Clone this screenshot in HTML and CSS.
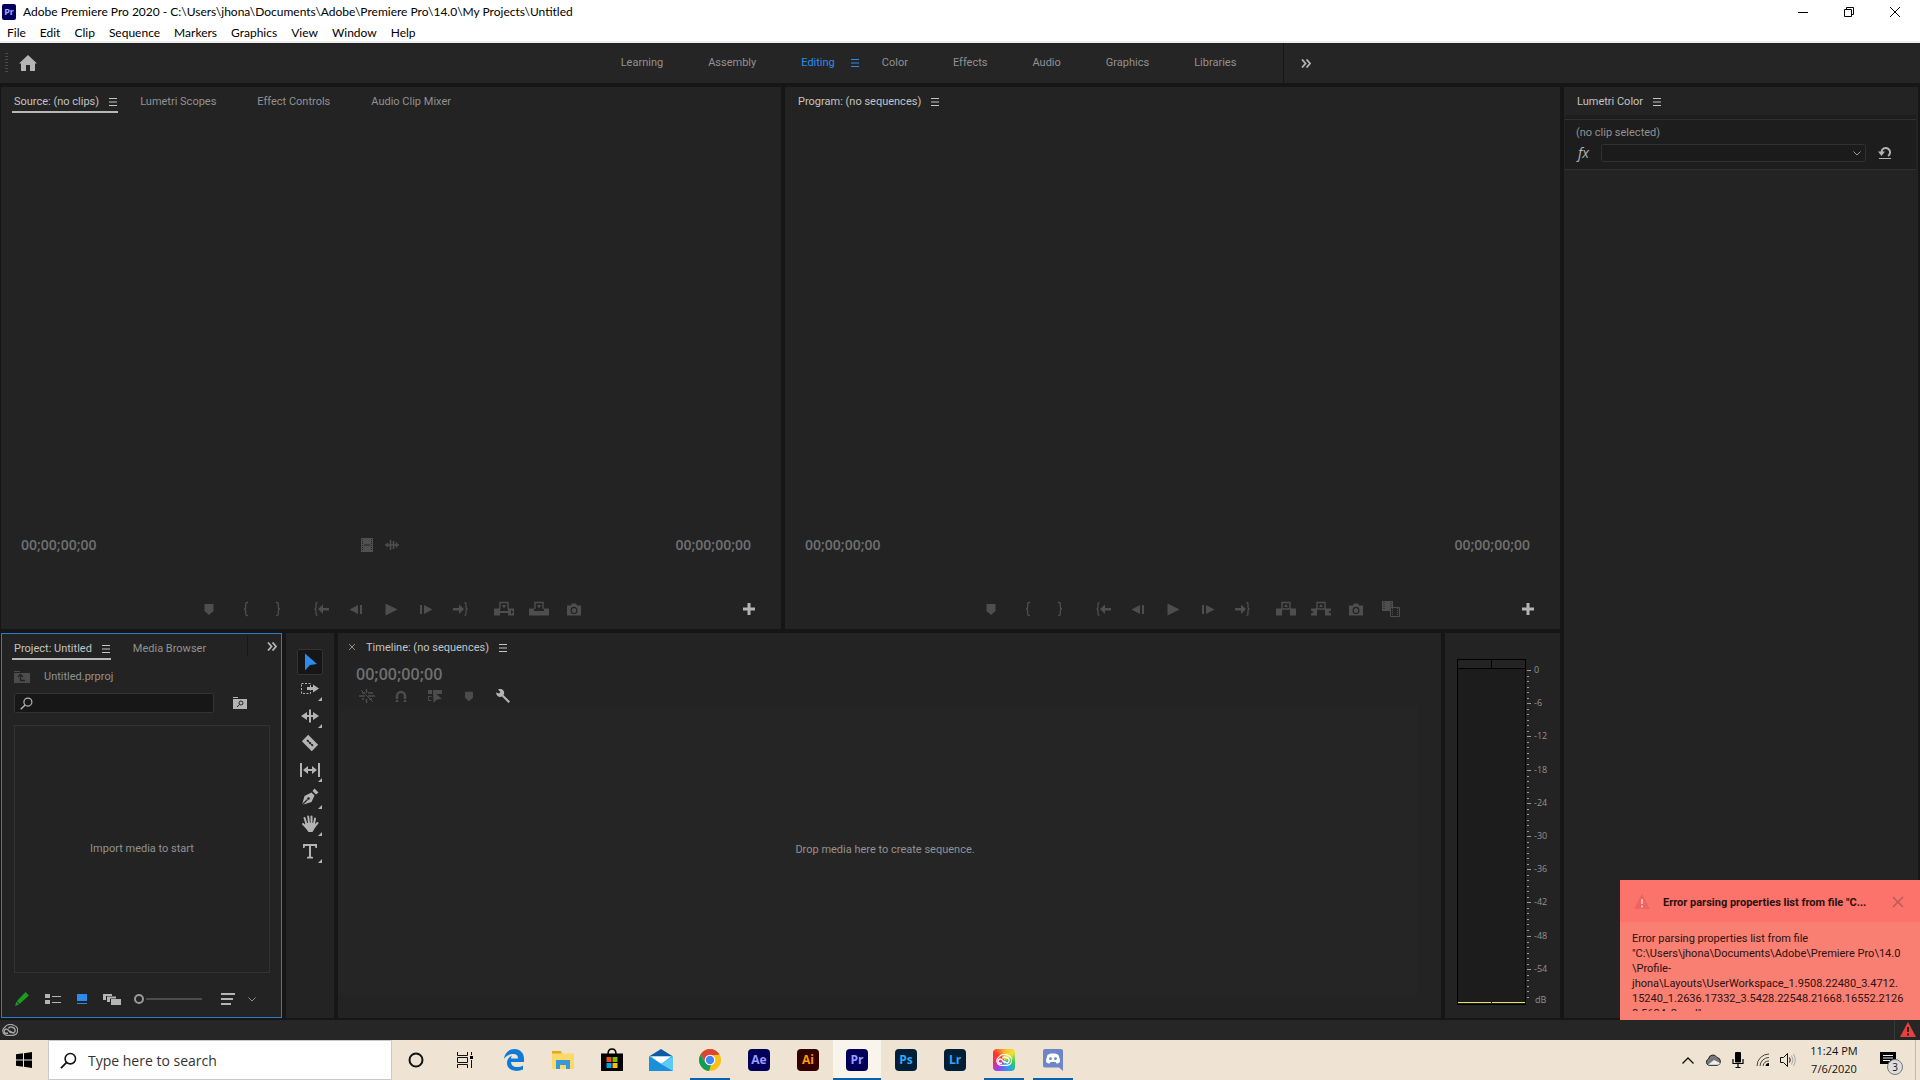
FILE: index.html
```html
<!DOCTYPE html>
<html lang="en">
<head>
<meta charset="utf-8">
<title>Adobe Premiere Pro 2020</title>
<link rel="stylesheet" href="styles.css">
</head>
<body>
<svg class="sprite" aria-hidden="true">
  <symbol id="menu" viewBox="0 0 8 8"><path d="M0 .5h8M0 4h8M0 7.5h8" stroke="currentColor"/></symbol>
  <symbol id="more" viewBox="0 0 10 9"><path d="M1 .5l3.5 4L1 8.500M5.500.5l3.500 4-3.500 4" fill="none" stroke="currentColor" stroke-width="1.800"/></symbol>
  <symbol id="chev" viewBox="0 0 8 5"><path d="M.5.5L4 4 7.500.5" fill="none" stroke="currentColor"/></symbol>
  <symbol id="marker" viewBox="0 0 16 16"><path d="M3.500 3h9v7L8 14l-4.500-4z" fill="currentColor"/></symbol>
  <symbol id="brl" viewBox="0 0 16 16"><path d="M10 1.500H9Q7.700 1.500 7.700 3v3Q7.700 8 6 8q1.700 0 1.700 2v3q0 1.500 1.300 1.500h1" fill="none" stroke="currentColor" stroke-width="1.300"/></symbol>
  <symbol id="brr" viewBox="0 0 16 16"><path d="M6 1.500h1q1.300 0 1.300 1.500v3q0 2 1.700 2-1.700 0-1.700 2v3q0 1.500-1.300 1.500H6" fill="none" stroke="currentColor" stroke-width="1.300"/></symbol>
  <symbol id="goin" viewBox="0 0 16 16"><path d="M4.500 1.500Q3 1.500 3 3v3q0 2-1.500 2Q3 8 3 10v3q0 1.500 1.500 1.500" fill="none" stroke="currentColor" stroke-width="1.300"/><path d="M5 8l5-4.500V7h6v2.500h-6V13z" fill="currentColor"/></symbol>
  <symbol id="goout" viewBox="0 0 16 16"><path d="M11.500 1.500Q13 1.500 13 3v3q0 2 1.500 2Q13 8 13 10v3q0 1.500-1.500 1.500" fill="none" stroke="currentColor" stroke-width="1.300"/><path d="M11 8L6 3.500V7H0v2.500h6V13z" fill="currentColor"/></symbol>
  <symbol id="prev" viewBox="0 0 16 16"><path d="M1.500 8.500L10 4v9zM12 4h2v9h-2z" fill="currentColor"/></symbol>
  <symbol id="next" viewBox="0 0 16 16"><path d="M14.500 8.500L6 4v9zM2 4h2v9H2z" fill="currentColor"/></symbol>
  <symbol id="play" viewBox="0 0 16 16"><path d="M2.500 2.500l12 6-12 6z" fill="currentColor"/></symbol>
  <symbol id="insert" viewBox="0 0 20 16"><path d="M6 8V1.500h8V8" fill="none" stroke="currentColor" stroke-width="1.400"/><path d="M8 4h4l-2 3.500zM0 7.500h6V10h8V7.500h6v7h-6V12H6v2.500H0z" fill="currentColor"/><path d="M17 9l2.500 2L17 13z" fill="#232323"/></symbol>
  <symbol id="overwrite" viewBox="0 0 20 16"><path d="M6 8V1.500h8V8" fill="none" stroke="currentColor" stroke-width="1.400"/><path d="M8 4h4l-2 3.500zM0 7.500h5V10h10V7.500h5v7H0z" fill="currentColor"/></symbol>
  <symbol id="lift" viewBox="0 0 20 16"><path d="M6 8V1.500h8V8z" fill="none" stroke="currentColor" stroke-width="1.400"/><path d="M8 6h4l-2-3zM0 7.500h6v7H0zM14 7.500h6v7h-6z" fill="currentColor"/></symbol>
  <symbol id="extract" viewBox="0 0 20 16"><path d="M6 8V1.500h8V8z" fill="none" stroke="currentColor" stroke-width="1.400"/><path d="M8 6h4l-2-3zM0 7.500h6v7H0v-2l3-1.500-3-1.500zM20 7.500h-6v7h6v-2L17 11l3-1.500z" fill="currentColor"/></symbol>
  <symbol id="camera" viewBox="0 0 16 16"><path fill-rule="evenodd" d="M1 4.500h4L6 2.500h4l1 2h4v10H1zM8 5.700a3.500 3.700 0 100 7.400 3.500 3.700 0 000-7.400zM8 7a2.300 2.500 0 110 5 2.300 2.500 0 010-5z" fill="currentColor"/></symbol>
  <symbol id="compare" viewBox="0 0 20 16"><path d="M1 0h11v10H1z" fill="currentColor"/><path d="M3 1v8M10 1v8" stroke="#232323" stroke-dasharray="1 1"/><path d="M9.500 6.500h9v9h-9z" fill="#232323" stroke="currentColor"/><path d="M11.500 7v8M16.500 7v8" stroke="currentColor" stroke-dasharray="1 1"/></symbol>
  <symbol id="plus" viewBox="0 0 12 12"><path d="M4.500 0h3v4.500H12v3H7.500V12h-3V7.500H0v-3h4.500z" fill="currentColor"/></symbol>
  <symbol id="film" viewBox="0 0 14 14"><path d="M1 0h12v14H1z" fill="currentColor"/><path d="M2.500 1v12M11.500 1v12" stroke="#232323" stroke-dasharray="1 1"/><path d="M4 7h6" stroke="#232323"/></symbol>
  <symbol id="wave" viewBox="0 0 14 14"><path d="M0 7h14M2.500 5v4M5.500 2v10M8.500 3v8M11.500 4.500v5" stroke="currentColor" stroke-width="1.500"/></symbol>
  <symbol id="glass" viewBox="0 0 14 14"><circle cx="8.500" cy="5.500" r="4.300" fill="none" stroke="currentColor" stroke-width="1.300"/><path d="M5.500 8.500L.8 13.200" stroke="currentColor" stroke-width="1.500"/></symbol>
  <symbol id="warn" viewBox="0 0 16 16"><path d="M8 0l8 15H0z" fill="currentColor"/></symbol>
  <symbol id="ticks" viewBox="0 0 4 66" preserveAspectRatio="none"><path d="M0 1h4M0 12h2M0 23h2M0 34h2M0 45h2M0 56h2" stroke="#9a9a9a" stroke-width="2" shape-rendering="crispEdges"/></symbol>
  <symbol id="cloud" viewBox="0 0 16 12"><path d="M5 11.300A4.500 4.500 0 013 3 6 5 0 0112 1.500a5 5 0 01-1 9.800z" fill="none" stroke="currentColor" stroke-width="1.200"/><path d="M9 9L6.300 6.300A2.200 2.200 0 103.500 9.300H6M6.500 4.500A2.500 2.500 0 0110.500 3.500a2.900 2.900 0 011 5.500Q10 9 8 7" fill="none" stroke="currentColor" stroke-width="1.400"/></symbol>
</svg>

<header class="titlebar">
  <div class="title-row">
    <span class="app-logo">Pr</span>
    <span class="title">Adobe Premiere Pro 2020 - C:\Users\jhona\Documents\Adobe\Premiere Pro\14.0\My Projects\Untitled</span>
    <button class="win" aria-label="Minimize"><svg width="10" height="10"><path d="M0 5.500h10" stroke="#000"/></svg></button>
    <button class="win" aria-label="Restore"><svg width="10" height="10" fill="none" stroke="#000"><path d="M.5 2.500h7v7h-7zM2.500 2.500v-2h7v7h-2"/></svg></button>
    <button class="win" aria-label="Close"><svg width="10" height="10"><path d="M0 0l10 10M10 0L0 10" stroke="#000"/></svg></button>
  </div>
  <nav class="menubar"><button>File</button><button>Edit</button><button>Clip</button><button>Sequence</button><button>Markers</button><button>Graphics</button><button>View</button><button>Window</button><button>Help</button></nav>
</header>

<div class="workbar">
  <div class="workbar-side"><span class="grip"></span><button aria-label="Home"><svg width="18" height="16" viewBox="0 0 18 16"><path d="M9 0l9 8.500h-2V16h-5v-6H7v6H2V8.500H0z" fill="#b4b4b4"/></svg></button></div>
  <nav class="workspaces">
    <button>Learning</button><button>Assembly</button><button class="current">Editing<svg width="8" height="8"><use href="#menu"/></svg></button><button>Color</button><button>Effects</button><button>Audio</button><button>Graphics</button><button>Libraries</button>
  </nav>
  <button class="overflow" aria-label="More workspaces"><svg width="10" height="9"><use href="#more"/></svg></button>
  <div class="workbar-side"></div>
</div>

<main class="workspace">
  <div class="monitors">
    <section class="panel monitor">
      <div class="tabs">
        <button class="tab active">Source: (no clips)<svg width="8" height="8"><use href="#menu"/></svg></button>
        <button class="tab">Lumetri Scopes</button><button class="tab">Effect Controls</button><button class="tab">Audio Clip Mixer</button>
      </div>
      <div class="view"></div>
      <div class="times">
        <span>00;00;00;00</span>
        <span class="drag"><svg width="14" height="14"><use href="#film"/></svg><svg width="14" height="14"><use href="#wave"/></svg></span>
        <span>00;00;00;00</span>
      </div>
      <div class="transport">
        <span class="side"></span>
        <div class="grp"><button aria-label="Add marker"><svg width="16" height="16"><use href="#marker"/></svg></button></div>
        <div class="grp tight"><button aria-label="Mark in"><svg width="16" height="16"><use href="#brl"/></svg></button><button aria-label="Mark out"><svg width="16" height="16"><use href="#brr"/></svg></button></div>
        <div class="grp"><button aria-label="Go to in"><svg width="16" height="16"><use href="#goin"/></svg></button><button aria-label="Step back"><svg width="16" height="16"><use href="#prev"/></svg></button><button aria-label="Play"><svg width="16" height="16"><use href="#play"/></svg></button><button aria-label="Step forward"><svg width="16" height="16"><use href="#next"/></svg></button><button aria-label="Go to out"><svg width="16" height="16"><use href="#goout"/></svg></button></div>
        <div class="grp"><button aria-label="Insert"><svg width="20" height="16"><use href="#insert"/></svg></button><button aria-label="Overwrite"><svg width="20" height="16"><use href="#overwrite"/></svg></button><button aria-label="Export frame"><svg width="16" height="16"><use href="#camera"/></svg></button></div>
        <span class="side"><button class="add" aria-label="Button editor"><svg width="12" height="12"><use href="#plus"/></svg></button></span>
      </div>
    </section>
    <section class="panel monitor program">
      <div class="tabs"><button class="tab active plain">Program: (no sequences)<svg width="8" height="8"><use href="#menu"/></svg></button></div>
      <div class="view"></div>
      <div class="times"><span>00;00;00;00</span><span>00;00;00;00</span></div>
      <div class="transport">
        <span class="side"></span>
        <div class="grp"><button aria-label="Add marker"><svg width="16" height="16"><use href="#marker"/></svg></button></div>
        <div class="grp tight"><button aria-label="Mark in"><svg width="16" height="16"><use href="#brl"/></svg></button><button aria-label="Mark out"><svg width="16" height="16"><use href="#brr"/></svg></button></div>
        <div class="grp"><button aria-label="Go to in"><svg width="16" height="16"><use href="#goin"/></svg></button><button aria-label="Step back"><svg width="16" height="16"><use href="#prev"/></svg></button><button aria-label="Play"><svg width="16" height="16"><use href="#play"/></svg></button><button aria-label="Step forward"><svg width="16" height="16"><use href="#next"/></svg></button><button aria-label="Go to out"><svg width="16" height="16"><use href="#goout"/></svg></button></div>
        <div class="grp"><button aria-label="Lift"><svg width="20" height="16"><use href="#lift"/></svg></button><button aria-label="Extract"><svg width="20" height="16"><use href="#extract"/></svg></button><button aria-label="Export frame"><svg width="16" height="16"><use href="#camera"/></svg></button><button aria-label="Comparison view"><svg width="20" height="16"><use href="#compare"/></svg></button></div>
        <span class="side"><button class="add" aria-label="Button editor"><svg width="12" height="12"><use href="#plus"/></svg></button></span>
      </div>
    </section>
  </div>

  <div class="lower">
    <section class="panel project">
      <div class="tabs">
        <button class="tab active">Project: Untitled<svg width="8" height="8"><use href="#menu"/></svg></button>
        <button class="tab">Media Browser</button>
        <button class="overflow" aria-label="More panels"><svg width="10" height="9"><use href="#more"/></svg></button>
      </div>
      <div class="crumb"><svg width="16" height="12" viewBox="0 0 16 12"><path d="M0 0h6v1H0zM0 2h16v10H0z" fill="#4c4c4c"/><path d="M4 6l2.500-2.500L9 6M6.500 4v5.500H11" fill="none" stroke="#232323" stroke-width="1.300"/></svg><span>Untitled.prproj</span></div>
      <div class="find">
        <label class="find-box"><svg width="13" height="13"><use href="#glass"/></svg><input type="text" aria-label="Search project"></label>
        <button aria-label="New search bin"><svg width="14" height="12" viewBox="0 0 14 12"><path d="M0 0h5v1H0zM0 2h14v10H0z" fill="#b4b4b4"/><circle cx="8" cy="6" r="2" fill="none" stroke="#232323"/><path d="M6.500 7.500L4 10" stroke="#232323"/></svg></button>
      </div>
      <div class="bin">Import media to start</div>
      <div class="bin-tools">
        <button aria-label="Read/write"><svg width="14" height="14" viewBox="0 0 14 14"><path d="M10.500 0L14 3.500 4.500 12 2 9z" fill="#1d9a20"/><path d="M1.500 9.500L4 12.500 0 14z" fill="#1d9a20"/></svg></button>
        <button aria-label="List view"><svg width="16" height="11" viewBox="0 0 16 11"><path d="M0 0h5v4H0zM0 6h5v4H0z" fill="#b4b4b4"/><path d="M7 2.500h9M7 8.500h9" stroke="#b4b4b4"/></svg></button>
        <button aria-label="Icon view"><svg width="10" height="10" viewBox="0 0 10 10"><path d="M0 0h10v7H0zM0 9h10v1H0z" fill="#2d8ceb"/></svg></button>
        <button aria-label="Freeform view"><svg width="18" height="11" viewBox="0 0 18 11"><path d="M0 0h9v2H3v4H0z" fill="#b4b4b4"/><path d="M4 2.500h9v2H7V8H4z" fill="#b4b4b4"/><path d="M8 5h10v6H8z" fill="#b4b4b4"/></svg></button>
        <input class="zoom" type="range" min="0" max="100" value="0" aria-label="Icon size">
        <button class="sort" aria-label="Sort"><svg width="14" height="12" viewBox="0 0 14 12"><path d="M0 1h14M0 6h12M0 11h10" stroke="#b4b4b4" stroke-width="2"/></svg></button>
        <button aria-label="Sort options"><svg width="8" height="5"><use href="#chev"/></svg></button>
      </div>
    </section>

    <section class="panel tools">
      <button class="selected" aria-label="Selection"><svg width="20" height="20" viewBox="0 0 20 20"><path d="M5 1.500L17 12l-7 1-5 5.500z" fill="#2d8ceb"/></svg></button>
      <button class="more" aria-label="Track select"><svg width="20" height="20" viewBox="0 0 20 20"><path d="M1.500 4.500h9v10h-9z" fill="none" stroke="#b4b4b4" stroke-dasharray="2 1.500"/><path d="M7 8h6V5.500l6 4-6 4V11H7z" fill="#b4b4b4"/></svg></button>
      <button class="more" aria-label="Ripple edit"><svg width="20" height="20" viewBox="0 0 20 20"><path d="M9 3.500h2v13H9zM1 10l6-4v3h6V6l6 4-6 4v-3H7v3z" fill="#b4b4b4"/></svg></button>
      <button aria-label="Razor"><svg width="20" height="20" viewBox="0 0 20 20"><g transform="rotate(45 10 10)"><path d="M3 5.500h14v9H3z" fill="#b4b4b4"/><path d="M5.500 10h9M7 9v2M10 9v2M13 9v2" stroke="#232323" stroke-width="1.200"/></g></svg></button>
      <button class="more" aria-label="Slip"><svg width="22" height="20" viewBox="0 0 22 20"><path d="M1 3h2v14H1zM19 3h2v14h-2zM4 10l5-4v3h4V6l5 4-5 4v-3H9v3z" fill="#b4b4b4"/></svg></button>
      <button class="more" aria-label="Pen"><svg width="20" height="20" viewBox="0 0 20 20"><path d="M12.500 4l2-2.500 4 4L16 7.500z" fill="#b4b4b4"/><path d="M2 18L4.500 9 11.500 5.500 14.500 8.500 11.500 15z" fill="#b4b4b4"/><path d="M2 18l5.500-5.500" stroke="#232323" stroke-width="1.200"/><circle cx="8.500" cy="11.500" r="1.300" fill="#232323"/></svg></button>
      <button class="more" aria-label="Hand"><svg width="20" height="20" viewBox="0 0 20 20"><path d="M6.500 10L4.500 4M9 9L8.200 2.500M11.500 9V2.500M14 10l1-5.500M6.500 13.500L3 10M14.500 12.500L17.500 9" stroke="#b4b4b4" stroke-width="2" stroke-linecap="round"/><path d="M5.500 9h9.500l.5 4-3 5H8.500l-4-5.500z" fill="#b4b4b4"/></svg></button>
      <button class="more" aria-label="Type"><svg width="20" height="20" viewBox="0 0 20 20"><path d="M3 3h14v4h-1.500L15 5h-4v10.500l2 .5v1.500H7V16l2-.5V5H5l-.5 2H3z" fill="#b4b4b4"/></svg></button>
    </section>

    <section class="panel timeline">
      <div class="tabs"><button class="close" aria-label="Close tab"><svg width="6" height="6"><path d="M0 0l6 6M6 0L0 6" stroke="#8c8c8c"/></svg></button><button class="tab active plain">Timeline: (no sequences)<svg width="8" height="8"><use href="#menu"/></svg></button></div>
      <div class="seq-time">00;00;00;00</div>
      <div class="seq-tools">
        <button aria-label="Nest"><svg width="16" height="14" viewBox="0 0 16 14"><path d="M0 7h6M9 7h7M3 4h3M9 4h5M3 10h2M10 10h3M7.500 0v4M7.500 10v4" stroke="currentColor" stroke-width="1.500"/><path d="M2 1l12 12" stroke="currentColor"/></svg></button>
        <button aria-label="Snap"><svg width="12" height="12" viewBox="0 0 12 12"><path d="M2 12V6a4 4 0 018 0v6" fill="none" stroke="currentColor" stroke-width="2.500"/><path d="M0 9.500h12" stroke="#232323"/></svg></button>
        <button aria-label="Linked selection"><svg width="14" height="14" viewBox="0 0 14 14"><path d="M0 1h4v4H0zM5 1h9v4H5z" fill="currentColor"/><path d="M3.500 7.500h-3v4h3" fill="none" stroke="currentColor"/><path d="M5 2l9 8-5 .5L5.500 14z" fill="currentColor"/></svg></button>
        <button aria-label="Add marker"><svg width="14" height="14" viewBox="0 0 16 16"><use href="#marker"/></svg></button>
        <button class="lit" aria-label="Timeline settings"><svg width="14" height="14" viewBox="0 0 14 14"><path d="M2 .5A4 4 0 017.500 6L14 12.500 12.500 14 6 7.500A4 4 0 01.2 3.500L3 4.500 4.500 3z" fill="currentColor"/></svg></button>
      </div>
      <div class="drop">Drop media here to create sequence.</div>
    </section>

    <section class="panel audio">
      <div class="meter"><div class="peaks"><i></i><i></i></div><div class="floor"><i></i><i></i></div></div>
      <div class="scale">
        <ol>
          <li><svg width="4" height="33"><use href="#ticks"/></svg><span>0</span></li>
          <li><svg width="4" height="33"><use href="#ticks"/></svg><span>-6</span></li>
          <li><svg width="4" height="33"><use href="#ticks"/></svg><span>-12</span></li>
          <li><svg width="4" height="33"><use href="#ticks"/></svg><span>-18</span></li>
          <li><svg width="4" height="33"><use href="#ticks"/></svg><span>-24</span></li>
          <li><svg width="4" height="33"><use href="#ticks"/></svg><span>-30</span></li>
          <li><svg width="4" height="33"><use href="#ticks"/></svg><span>-36</span></li>
          <li><svg width="4" height="33"><use href="#ticks"/></svg><span>-42</span></li>
          <li><svg width="4" height="33"><use href="#ticks"/></svg><span>-48</span></li>
          <li><svg width="4" height="33"><use href="#ticks"/></svg><span>-54</span></li>
        </ol>
        <span class="db">dB</span>
      </div>
    </section>
  </div>

  <section class="panel lumetri">
    <div class="tabs"><button class="tab active plain">Lumetri Color<svg width="8" height="8"><use href="#menu"/></svg></button></div>
    <div class="clip">
      <span>(no clip selected)</span>
      <div class="fx-row">
        <label for="fx">fx</label>
        <div class="select"><select id="fx"><option></option></select><svg width="8" height="5"><use href="#chev"/></svg></div>
        <button aria-label="Reset"><svg width="14" height="14" viewBox="0 0 14 14"><path d="M3.500 6a4.300 4.300 0 116.500 4" fill="none" stroke="#b4b4b4" stroke-width="2"/><path d="M0 5.500h7L3.500 10z" fill="#b4b4b4"/><path d="M1 12.500h12" stroke="#b4b4b4"/></svg></button>
      </div>
    </div>
  </section>

  <aside class="toast" role="alert">
    <header><svg width="16" height="16"><use href="#warn"/><path d="M8 5v5M8 11.500v2" stroke="#ffb5a8" stroke-width="2"/></svg><strong>Error parsing properties list from file "C...</strong><button aria-label="Dismiss"><svg width="12" height="12"><path d="M1 1l10 10M11 1L1 11" stroke="#b85c55" stroke-width="1.500"/></svg></button></header>
    <p>Error parsing properties list from file<br>"C:\Users\jhona\Documents\Adobe\Premiere Pro\14.0<br>\Profile-<br>jhona\Layouts\UserWorkspace_1.9508.22480_3.4712.<br>15240_1.2636.17332_3.5428.22548.21668.16552.2126<br>8.5624_2.xml"</p>
  </aside>
</main>

<footer class="status">
  <svg class="cc-mark" width="16" height="12"><use href="#cloud"/></svg>
  <span class="alert"><svg width="16" height="16"><use href="#warn"/><path d="M8 5v5M8 11.500v2" stroke="#222" stroke-width="2"/></svg></span>
</footer>

<footer class="taskbar">
  <button class="start" aria-label="Start"><svg width="16" height="16" viewBox="0 0 16 16"><path d="M0 2.300L7 1.300v6.200H0zM8 1.200L16 0v7.500H8zM0 8.500h7v6.200l-7-1zM8 8.500h8V16l-8-1.200z"/></svg></button>
  <label class="search"><svg width="17" height="17" viewBox="0 0 14 14"><use href="#glass"/></svg><input type="text" placeholder="Type here to search" aria-label="Search Windows"></label>
  <nav class="apps">
    <button aria-label="Cortana"><svg width="16" height="16"><circle cx="8" cy="8" r="6.500" fill="none" stroke="#111" stroke-width="2"/></svg></button>
    <button aria-label="Task view"><svg width="16" height="16" viewBox="0 0 16 16"><path d="M.5 0v3.500h10V0M.5 16v-3.500h10V16M.5 5.500h10v5H.5zM14.500 0v3M14.500 8v8" fill="none" stroke="#111"/><path d="M13 4h3v3h-3z"/></svg></button>
    <button aria-label="Edge"><svg width="20" height="22" viewBox="0 0 20 22"><path fill="#0f7bd8" d="M0 10C.5 4 5 0 10.500 0 16.500 0 20 4.500 20 9.500V13H7c0 3 2.500 5 6 5 2.300 0 4.200-.6 6-1.600v4.200C17 21.500 15 22 12.500 22 6.500 22 3 18.500 3 14c0-3.500 2-6 5-7.500C7.300 7.500 7 8.500 7 9.500h7c0-3-1.500-4.500-4.500-4.500C5.500 5 2 7 0 10z"/></svg></button>
    <button aria-label="File Explorer"><svg width="22" height="18" viewBox="0 0 22 18"><path fill="#e0a91b" d="M0 0h9l1 3H0z"/><path fill="#ffd968" d="M0 2.500h22V18H0z"/><path fill="#3a98d8" d="M4 9h14v9h-4v-4H8v4H4z"/></svg></button>
    <button aria-label="Store"><svg width="24" height="24" viewBox="0 0 24 24"><path d="M8 6q0-5 4-5t4 5" fill="none" stroke="#000" stroke-width="1.500"/><path d="M1 5.500h22V23H1z"/><path fill="#f25022" d="M6.500 9h5v5h-5z"/><path fill="#7fba00" d="M12.500 9h5v5h-5z"/><path fill="#00a4ef" d="M6.500 15h5v5h-5z"/><path fill="#ffb900" d="M12.500 15h5v5h-5z"/></svg></button>
    <button aria-label="Mail"><svg width="24" height="22" viewBox="0 0 24 22"><path fill="#0c59a4" d="M0 7.500L12 0l12 7.500z"/><path fill="#2cb6f0" d="M0 7.500h24V22H0z"/><path fill="#fff" d="M2 7.500h20L12 15z"/><path fill="#1a90dc" d="M0 7.500L24 22H0z"/><path fill="#5cc9f7" d="M24 7.500L12 15l12 7z"/></svg></button>
    <button class="open" aria-label="Chrome"><svg width="22" height="22" viewBox="0 0 22 22"><circle cx="11" cy="11" r="11" fill="#fbc116"/><path fill="#db4437" d="M1.500 5.500A11 11 0 0120.500 5.500L11 6.500 6.500 13z"/><path fill="#0f9d58" d="M1.500 5.500L6.500 13.500 12 16l-2 6A11 11 0 011.500 5.500z"/><circle cx="11" cy="11" r="5.300" fill="#fff"/><circle cx="11" cy="11" r="4.200" fill="#4285f4"/></svg></button>
    <button><span class="tile ae">Ae</span></button>
    <button><span class="tile ai">Ai</span></button>
    <button class="open active"><span class="tile pr">Pr</span></button>
    <button><span class="tile ps">Ps</span></button>
    <button><span class="tile lr">Lr</span></button>
    <button class="open" aria-label="Creative Cloud"><span class="tile cc"><svg width="16" height="12"><use href="#cloud"/></svg></span></button>
    <button class="open" aria-label="Discord"><svg width="20" height="22" viewBox="0 0 20 22"><path fill="#6f85c9" d="M2 0h16q2 0 2 2v20l-4-3.500H2q-2 0-2-2V2Q0 0 2 0z"/><path fill="#fff" d="M4.500 6q2.500-2 4-1.500h3q1.500-.5 4 1.500 1.500 3.500 1.500 7-1.500 1.500-3.500 1.500l-1-1.500h-5l-1 1.500Q4.500 14.500 3 13q0-3.500 1.500-7z"/><circle cx="7.500" cy="9.700" r="1.400" fill="#6f85c9"/><circle cx="12.500" cy="9.700" r="1.400" fill="#6f85c9"/></svg></button>
  </nav>
  <div class="tray">
    <button aria-label="Hidden icons"><svg width="12" height="7" viewBox="0 0 12 7"><path d="M.5 6.500L6 1l5.500 5.500" fill="none" stroke="#111" stroke-width="1.300"/></svg></button>
    <button aria-label="OneDrive"><svg width="16" height="12" viewBox="0 0 16 12"><path d="M4 11.300A3.300 3.300 0 013.500 5a4.500 4.500 0 018.500-1.500 4 4 0 01.5 7.800z" fill="#777" stroke="#222"/><path d="M3 10.800L9 6l6 3q-.5 1.800-2.500 1.800z" fill="#eee"/></svg></button>
    <button aria-label="Microphone"><svg width="12" height="16" viewBox="0 0 12 16"><rect x="3" width="6" height="10.500" rx="1"/><path d="M1 7v4.500h10V7M6 12v3M3.500 15.500h5" fill="none" stroke="#000" stroke-width="1.200"/></svg></button>
    <button aria-label="Network"><svg width="14" height="14" viewBox="0 0 14 14"><path d="M1 13A12 12 0 0113 1M4 13A9 9 0 0113 4.500M7 13a6 6 0 016-5" fill="none" stroke="#444"/><path d="M9.500 13a3.500 3.500 0 013.500-3v3z"/></svg></button>
    <button aria-label="Volume"><svg width="16" height="14" viewBox="0 0 16 14"><path d="M.5 4.500h3l4-4v13l-4-4h-3zM9.500 4.500q1.500 2.500 0 5" fill="none" stroke="#111"/><path d="M11.500 2.500q3 4.500 0 9M13.500 1q3.500 6 0 12" fill="none" stroke="#aaa"/></svg></button>
    <time>11:24 PM<br>7/6/2020</time>
    <button class="notif" aria-label="Notifications"><svg width="16" height="16" viewBox="0 0 16 16"><path d="M0 0h16v12h-3v3l-3-3H0z"/><path d="M3 3.500h10M3 6h10M3 8.500h7" stroke="#eee"/></svg><span class="badge">3</span></button>
  </div>
</footer>
</body>
</html>
```
FILE: styles.css
```css
* { box-sizing: border-box; }
body {
  margin: 0;
  min-height: 100vh;
  display: flex;
  flex-direction: column;
  background: #161616;
  color: #929292;
  font: 11px/16px Roboto, "Open Sans", sans-serif;
}
button {
  display: flex;
  align-items: center;
  justify-content: center;
  margin: 0;
  padding: 0;
  border: 0;
  background: none;
  color: inherit;
  font: inherit;
  white-space: nowrap;
}
svg { display: block; flex: none; }
.sprite { position: absolute; width: 0; height: 0; }

/* Title and menu */
.titlebar { background: #fff; color: #000; font: 12px/16px Lato, sans-serif; border-bottom: 2px solid #eef0ee; }
.title-row { display: flex; align-items: center; height: 23px; padding: 0 2px; }
.title { flex: 1; padding-left: 7px; }
.app-logo { width: 14px; height: 16px; border-radius: 2px; background: #00005b; color: #b0a8ff; font: bold 9px/15px "Open Sans", sans-serif; text-align: center; }
.win { width: 46px; height: 20px; }
.menubar { display: flex; gap: 14px; height: 18px; padding: 2px 0 0 7px; }

/* Workspace bar */
.workbar { display: flex; height: 40px; background: #252525; }
.workbar-side { flex: 1; display: flex; align-items: center; gap: 11px; padding-left: 5px; }
.workbar-side:last-child { padding: 0; }
.grip { width: 3px; height: 20px; background: repeating-linear-gradient(#4a4a4a 0 1px, #252525 1px 3px); }
.workspaces { display: flex; align-items: center; gap: 45px; padding: 0 47px 0 23px; border-right: 1px solid #161616; }
.workspaces button { gap: 16px; }
.workspaces .current { color: #2d8ceb; margin-right: -22px; }
.overflow { color: #b4b4b4; }
.workbar .overflow { width: 43px; }

/* Panel layout */
.workspace {
  position: relative;
  flex: 1;
  display: grid;
  grid-template-columns: 1559fr 354fr;
  grid-template-rows: 542fr 385fr;
  gap: 4px;
  padding: 4px 2px 2px 1px;
}
.monitors { display: grid; grid-template-columns: 780fr 775fr; gap: 4px; }
.lower { display: grid; grid-template-columns: 281px 48px 1fr 115px; gap: 4px; }
.lumetri { grid-column: 2; grid-row: 1 / 3; }
.panel { display: flex; flex-direction: column; background: #232323; min-width: 0; }
.tabs { display: flex; gap: 41px; height: 28px; padding-left: 11px; }
.tab { height: 26px; border-bottom: 2px solid transparent; padding-top: 5px; }
.tab.active { gap: 10px; color: #c4c4c4; border-bottom-color: #b8b8b8; margin-right: -19px; padding-left: 2px; padding-right: 1px; }
.tab.plain { border-bottom-color: transparent; }

/* Monitors */
.view { flex: 1; }
.times { display: flex; justify-content: space-between; align-items: center; height: 24px; margin-bottom: 40px; padding: 0 30px 0 20px; color: #707070; font: 600 14px/16px "Open Sans", sans-serif; }
.drag { display: flex; gap: 11px; margin-right: 14px; color: #505050; }
.transport { display: flex; align-items: center; height: 24px; margin-bottom: 8px; color: #4e4e4e; }
.transport .side { flex: 1; display: flex; justify-content: flex-end; }
.transport .grp { display: flex; gap: 3px; margin-right: 11px; }
.transport .grp:first-of-type { margin-right: 5px; }
.transport .grp:last-of-type { margin-right: 0; }
.transport .tight { gap: 0; }
.transport .grp button { width: 32px; height: 24px; }
.transport .add { width: 24px; height: 24px; margin-right: 20px; color: #b4b4b4; }
.program .transport { padding-left: 36px; }

/* Lumetri */
.clip { margin: 0 2px 0 1px; border-top: 4px solid #1d1d1d; background: #1d1d1d; box-shadow: inset 0 1px #303030; border-bottom: 1px solid #303030; padding: 6px 24px 4px 11px; }
.fx-row { display: flex; align-items: center; height: 24px; }
.fx-row label { width: 25px; padding-left: 2px; color: #b4b4b4; font: italic 14px/16px "Open Sans", sans-serif; }
.select { position: relative; flex: 1; margin-right: 12px; color: #9a9a9a; }
.select select { display: block; width: 100%; height: 18px; appearance: none; border: 1px solid #303030; border-radius: 2px; background: #1b1b1b; }
.select svg { position: absolute; right: 5px; top: 7px; pointer-events: none; }

/* Project */
.project { border: 1px solid #2e7bcb; }
.project .tabs { padding-left: 10px; }
.project .overflow { width: 38px; height: 20px; margin: 2px 0 0 auto; border-left: 1px solid #181818; padding-left: 14px; }
.crumb { display: flex; align-items: center; gap: 14px; height: 26px; padding: 4px 0 0 12px; }
.find { display: flex; align-items: center; gap: 19px; height: 34px; padding: 0 0 4px 12px; }
.find-box { display: flex; align-items: center; width: 200px; height: 20px; padding-left: 5px; border: 1px solid #333; border-radius: 2px; background: #171717; color: #b4b4b4; }
.find-box input { flex: 1; min-width: 0; border: 0; background: none; color: inherit; font: inherit; }
.bin { flex: 1; display: flex; align-items: center; justify-content: center; margin: 3px 11px 0 12px; border: 1px solid #333; }
.bin-tools { display: flex; align-items: center; height: 44px; padding: 8px 25px 0 13px; gap: 16px; }
.zoom { width: 68px; height: 12px; margin: 0 0 0 -3px; appearance: none; background: linear-gradient(#4c4c4c, #4c4c4c) 12px 5px / 56px 2px no-repeat; }
.zoom::-webkit-slider-thumb { appearance: none; width: 10px; height: 10px; border: 2px solid #9a9a9a; border-radius: 5px; background: #232323; }
.sort { margin-left: auto; margin-right: -3px; }

/* Tools */
.tools { align-items: center; padding-top: 16px; gap: 1px; }
.tools button { position: relative; width: 26px; height: 26px; }
.tools .selected { border: 1px solid #333; border-radius: 2px; background: #161616; }
.tools .more::after { content: ""; position: absolute; right: 1px; bottom: 1px; border: 2px solid transparent; border-right-color: #b4b4b4; border-bottom-color: #b4b4b4; }

/* Timeline */
.timeline .tabs { gap: 9px; padding-left: 11px; }
.close { height: 28px; }
.seq-time { padding: 4px 0 0 18px; color: #707070; font: 600 16px/18px "Open Sans", sans-serif; }
.seq-tools { display: flex; align-items: center; height: 22px; padding: 4px 0 0 21px; gap: 5px; color: #4c4c4c; }
.seq-tools button { width: 29px; }
.seq-tools button:first-child { width: 16px; margin-right: 6px; }
.seq-tools .lit { color: #b4b4b4; }
.drop { flex: 1; display: flex; align-items: center; justify-content: center; margin: 0 24px 23px 0; padding-left: 15px; background: #252525; }

/* Audio meters */
.audio { flex-direction: row; padding: 26px 0 13px 12px; }
.meter { display: flex; flex-direction: column; justify-content: space-between; width: 69px; border: 1px solid #000; background: #1c1c1c; }
.peaks { display: flex; height: 9px; border-bottom: 1px solid #000; background: #232323; }
.peaks i { flex: 1; }
.peaks i + i { border-left: 1px solid #000; }
.floor { display: flex; gap: 1px; margin-bottom: 1px; }
.floor i { flex: 1; height: 1px; background: #e8e354; }
.scale { position: relative; display: flex; padding: 11px 0 3px 1px; font: 9px/10px "Open Sans", sans-serif; }
.scale ol { display: flex; flex-direction: column; list-style: none; margin: 0; padding: 0; }
.scale li { flex: 1; display: flex; gap: 3px; }
.scale span { margin-top: -5px; }
.db { position: absolute; left: 9px; bottom: 0; }

/* Error message */
.toast { position: absolute; right: 0; bottom: 0; width: 300px; height: 140px; overflow: hidden; background: #f97f72; color: #2b1210; line-height: 15px; }
.toast header { display: flex; align-items: center; height: 42px; padding: 2px 16px 0 14px; gap: 13px; background: #fb736b; color: #ee6464; }
.toast strong { flex: 1; color: #2b1210; white-space: nowrap; }
.toast p { height: 83px; margin: 6px 0 0; padding: 3px 0 0 12px; overflow: hidden; white-space: nowrap; }

/* Status bar */
.status { display: flex; align-items: center; justify-content: space-between; height: 20px; padding: 0 4px 0 2px; background: #262626; }
.cc-mark { color: #a8a8a8; }
.alert { display: flex; align-items: center; height: 20px; padding-left: 5px; border-left: 1px solid #383838; color: #e8413c; }

/* Taskbar */
.taskbar { display: flex; height: 40px; background: #efe4d3; color: #111; font-family: "Open Sans", sans-serif; }
.start { width: 48px; }
.search { display: flex; align-items: center; width: 344px; padding-left: 11px; gap: 11px; border: 1px solid #c9c9c9; background: #fff; }
.search input { flex: 1; padding: 0; border: 0; outline: 0; font: 14px "Open Sans", sans-serif; }
.search input::placeholder { color: #333; opacity: 1; }
.apps { display: flex; gap: 1px; flex: 1; }
.apps button { width: 48px; border: solid transparent; border-width: 2px 0; }
.apps .open { background: linear-gradient(#0b62a8, #0b62a8) center bottom / 40px 2px no-repeat border-box; }
.apps .active { background: linear-gradient(#0b62a8, #0b62a8) center bottom / 48px 2px no-repeat border-box, #f9f4ec border-box; }
.tile { width: 22px; height: 22px; display: flex; align-items: center; justify-content: center; border-radius: 4px; font: bold 12px/20px "Open Sans", sans-serif; }
.ae, .pr { background: #00005b; color: #9f9bff; }
.ai { background: #330000; color: #ff9a00; }
.ps, .lr { background: #001e36; color: #31a8ff; }
.cc { background: conic-gradient(#ffb52e, #e9e43a, #37c95a, #2a9df4, #8a4df0, #ef2b6b, #f83a2e, #ffb52e); color: #fff; }
.tray { display: flex; align-items: center; }
.tray button { width: 25px; height: 40px; }
.tray time { width: 68px; line-height: 18px; text-align: center; }
.tray .notif { position: relative; width: 48px; margin-right: 4px; padding-right: 8px; border-right: 1px solid #c4baaa; }
.badge { position: absolute; right: 12px; top: 19px; width: 16px; height: 16px; border: 1px solid #777; border-radius: 8px; background: #ddd; font: 10px/14px "Open Sans", sans-serif; }
```
